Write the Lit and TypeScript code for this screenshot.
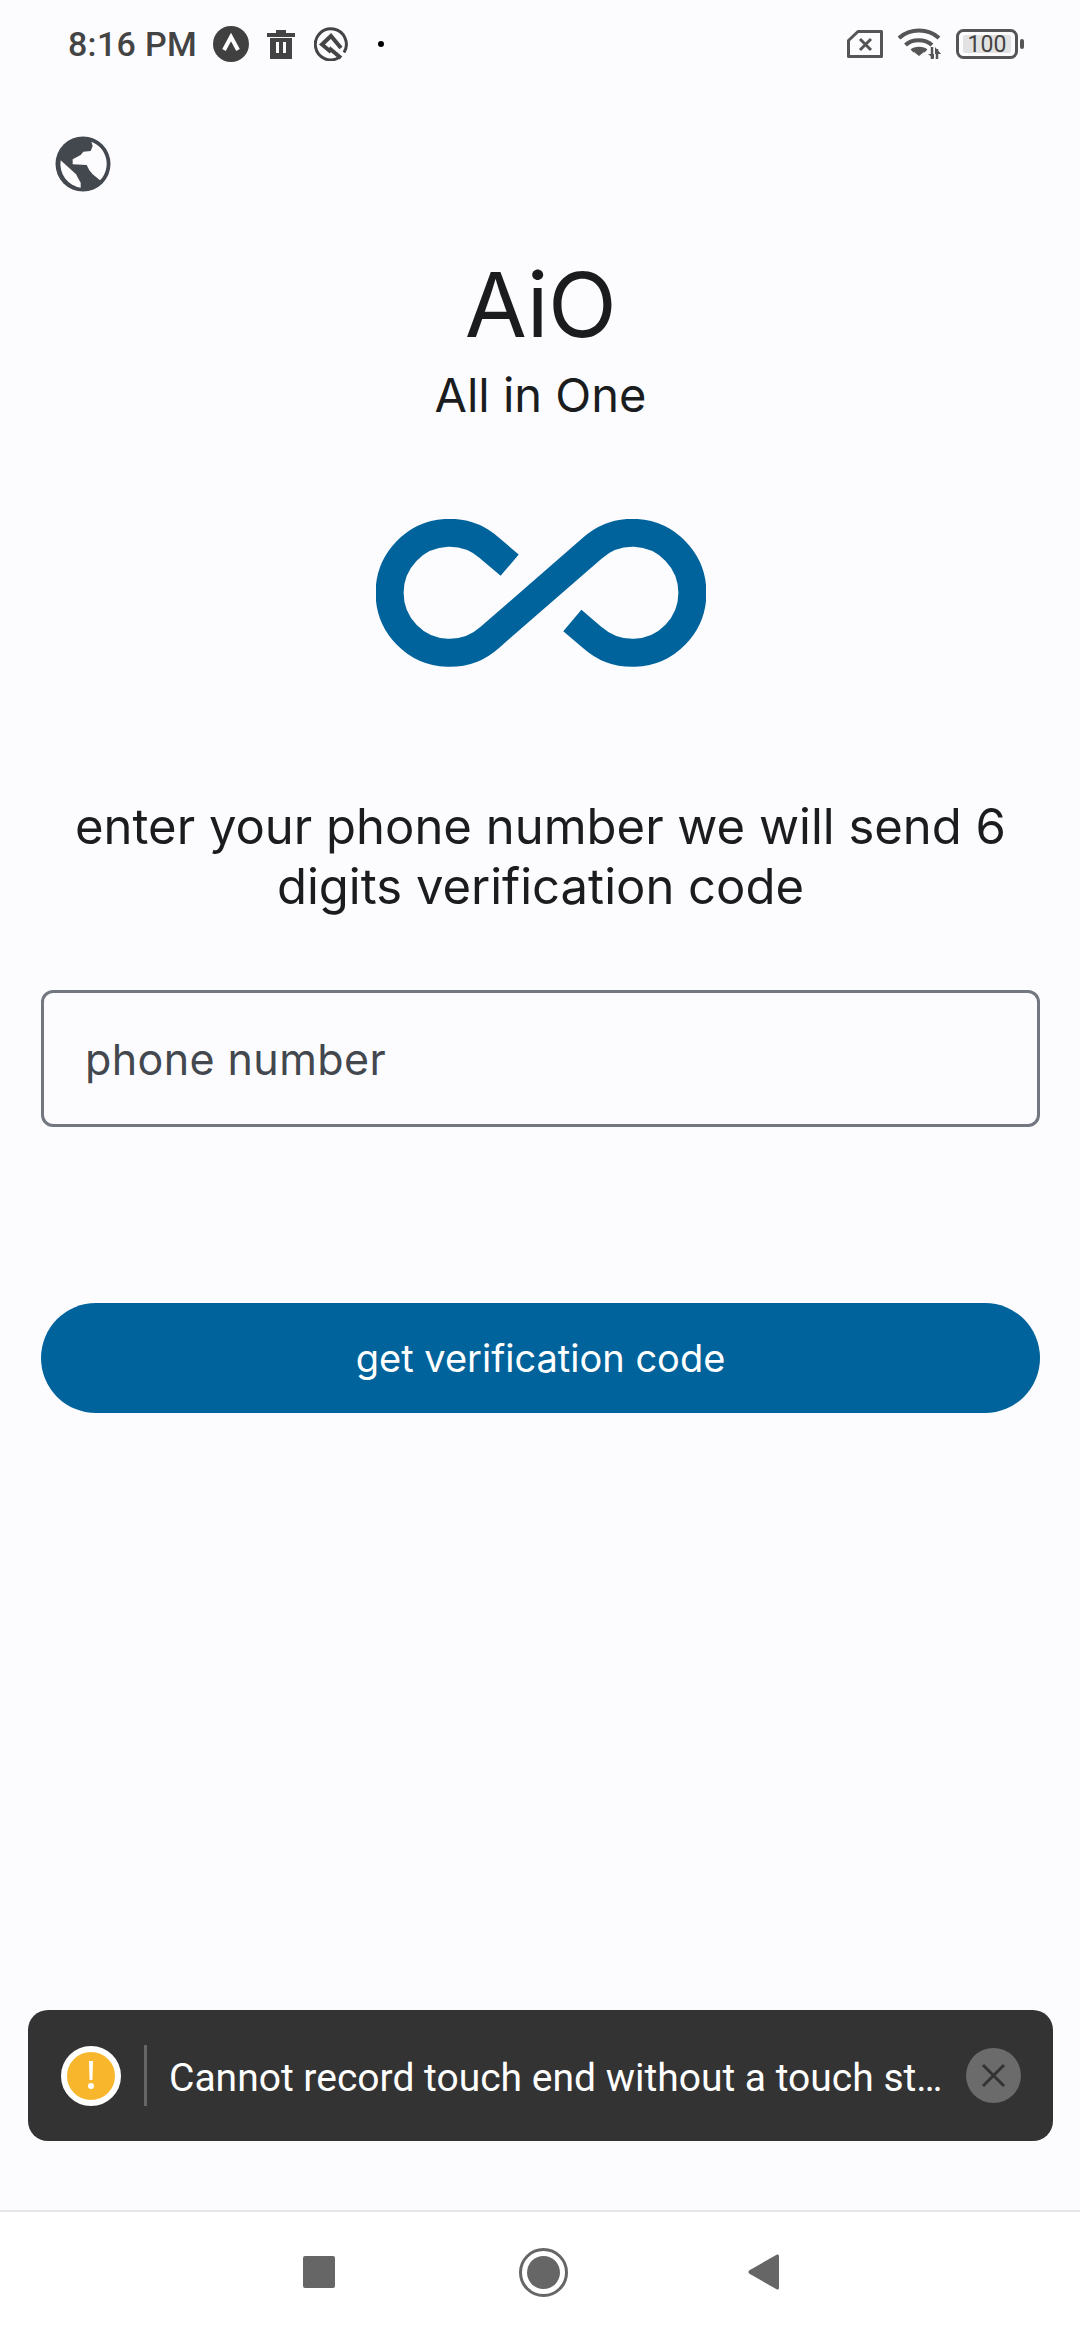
import { LitElement, html, css } from "lit";
import { customElement } from "lit/decorators.js";

@customElement("app-root")
export class AppRoot extends LitElement {
  static styles = css`
    :host { display: block; }
    .page {
      position: relative; width: 1080px; height: 2340px; background: #fcfcff;
      display: flex; flex-direction: column; overflow: hidden;
      font-family: "Inter", "Liberation Sans", sans-serif; color: #1a1c1e;
    }
    .status {
      height: 88px; display: flex; align-items: center; padding: 0 56px 0 68px; flex: none;
      box-sizing: border-box; justify-content: space-between;
    }
    .status-left, .status-right { display: flex; align-items: center; }
    .time { font: 500 34px "Roboto", sans-serif; letter-spacing: 0.3px; color: #444; width: 145px; white-space: nowrap; }
    .i-a { margin-right: 18px; }
    .i-t { margin-right: 19px; }
    .i-q { margin-right: 30px; }
    .i-s { margin-right: 15px; }
    .i-w { margin-right: 15px; }
    .globe { margin: 47px 0 0 54px; width: 58px; height: 58px; display: block; flex: none; }
    .content { display: flex; flex-direction: column; align-items: center; padding: 0 40px 0 41px; }
    .title { font-size: 90px; line-height: 100px; margin-top: 62px; letter-spacing: -0.5px; }
    .sub { font-size: 47px; line-height: 60px; margin-top: 10px; }
    .logo { display: block; margin-top: 94px; }
    .lead {
      font-size: 49px; line-height: 60px; text-align: center; margin-top: 130px; width: 100%;
    }
    .input {
      box-sizing: border-box; width: 100%; height: 137px; margin-top: 73px;
      border: 3px solid #73777f; border-radius: 12px; display: flex; align-items: center;
      padding-left: 41px; font-size: 43px; color: #43474e; letter-spacing: 0.4px;
    }
    .btn {
      width: 100%; height: 110px; margin-top: 176px; border-radius: 55px; background: #00639b;
      color: #fff; display: flex; align-items: center; justify-content: center;
      font-size: 38px;
    }
    .nav {
      margin-top: auto; height: 130px; flex: none; box-sizing: border-box; background: #fff;
      border-top: 2px solid #e6e6e9; display: flex; align-items: center;
      padding: 0 0 8px 303px;
    }
    .nav .sq { margin-right: 184px; }
    .nav .ci { margin-right: 180px; }
    .toast {
      position: absolute; left: 28px; top: 2010px; width: 1025px; height: 131px; box-sizing: border-box;
      background: #333; border-radius: 20px; display: flex; align-items: center; padding: 0 32px 0 33px;
      font: 400 39px "Roboto", sans-serif; color: #fff;
    }
    .warn {
      width: 60px; height: 60px; box-sizing: border-box; border: 6px solid #fff; border-radius: 50%;
      background: #f8b62d; flex: none; display: flex; align-items: center; justify-content: center;
    }
    .sep { width: 3px; height: 61px; background: #666; margin: 0 22px 0 23px; flex: none; }
    .msg {
      flex: 1; min-width: 0; white-space: nowrap; overflow: hidden; text-overflow: ellipsis;
      line-height: 50px; padding-top: 5px;
    }
    .close { margin-left: 19px; flex: none; display: block; }
  `;

  render() {
    return html`
      <div class="page">
        <div class="status">
          <div class="status-left">
            <span class="time">8:16 PM</span>
            <svg class="i-a" width="36" height="36" viewBox="0 0 36 36">
              <circle cx="18" cy="18" r="18" fill="#404040" />
              <path d="M11 24 L18 11 L25 24" fill="none" stroke="#fff" stroke-width="4" />
            </svg>
            <svg class="i-t" width="28" height="30" viewBox="0 0 28 30">
              <path fill="#444" fill-rule="evenodd" d="M0 4h9V1h10v3h9v4H0z M3 9h22v21H3z M9 13v11h3V13z M16 13v11h3V13z" />
            </svg>
            <svg class="i-q" width="34" height="34" viewBox="0 0 34 34" fill="none" stroke="#444">
              <path stroke-width="3" d="M25 30.5 A15.5 15.5 0 1 1 30 25.5" />
              <path stroke-width="4" d="M27 21 L17 9 L8 17.5 L17 25 M15 21 L27 31" />
            </svg>
            <svg width="6" height="6" viewBox="0 0 6 6"><circle cx="3" cy="3" r="3" fill="#000" /></svg>
          </div>
          <div class="status-right">
            <svg class="i-s" width="36" height="28" viewBox="0 0 36 28" fill="none" stroke="#555">
              <path stroke-width="3" stroke-linejoin="round" d="M11 1.5 H34.5 V26.5 H1.5 V10.5 Z" />
              <path stroke-width="3" d="M13 9 L24 20 M24 9 L13 20" />
            </svg>
            <svg class="i-w" width="43" height="32" viewBox="0 0 43 32" fill="none" stroke="#555">
              <path stroke-width="4" d="M1 10 C12 0 30 0 41 10" />
              <path stroke-width="4" d="M7.5 17 C14 10.5 27 10.5 34 17" />
              <path stroke-width="4" d="M14 23 C17 20 25 20 28 23" />
              <path fill="#555" stroke="none" d="M16 24 L21 20.5 L26 24 L21 28z" />
              <path stroke-width="2.5" d="M34 19 V31 M39 21 V31" />
              <path fill="#555" stroke="none" d="M30 26 H36 V31z M37 19 L43 26 H37z" />
            </svg>
            <svg width="68" height="30" viewBox="0 0 68 30">
              <rect x="1.5" y="1.5" width="59" height="27" rx="6" fill="none" stroke="#555" stroke-width="3" />
              <rect x="7" y="6" width="48" height="18" rx="2" fill="#e2e2e2" />
              <rect x="64" y="10" width="4" height="10" rx="2" fill="#555" />
              <text x="31" y="23" text-anchor="middle" font-family="Roboto, sans-serif" font-size="23" fill="#444">100</text>
            </svg>
          </div>
        </div>
        <svg class="globe" viewBox="12 12 174 174">
          <circle cx="99" cy="99" r="82.5" fill="#43474e" />
          <path fill="#fcfcff" d="M32 88 L65 118 L78 130 L92 155 L92 170 A72 72 0 0 1 32 88 Z" />
          <path fill="#fcfcff" d="M124 32 L128 45 L122 60 L100 62 L92 72 L68 85 L68 100 L110 102 L118 118 L128 130 L150 148 A71 71 0 0 0 124 32 Z" />
        </svg>
        <div class="content">
          <div class="title">AiO</div>
          <div class="sub">All in One</div>
          <svg class="logo" width="330" height="148" viewBox="105 84 990 443">
            <path fill="none" stroke="#00639b" stroke-width="84"
              d="M506 222 L446 171 A180 180 0 1 0 446 439 L754 171 A180 180 0 1 1 754 439 L694 388" />
          </svg>
          <div class="lead">enter your phone number we will send 6 digits verification code</div>
          <div class="input">phone number</div>
          <div class="btn">get verification code</div>
        </div>
        <div class="toast">
          <div class="warn">
            <svg width="8" height="30" viewBox="0 0 8 30">
              <path fill="#fff" d="M2 0h4l-.6 19H2.6z" /><circle cx="4" cy="25" r="3" fill="#fff" />
            </svg>
          </div>
          <div class="sep"></div>
          <div class="msg">Cannot record touch end without a touch start.</div>
          <svg class="close" width="55" height="55" viewBox="0 0 55 55">
            <circle cx="27.5" cy="27.5" r="27.5" fill="#6b6b6b" />
            <path d="M17 17 L38 38 M38 17 L17 38" stroke="#333" stroke-width="3" />
          </svg>
        </div>
        <div class="nav">
          <svg class="sq" width="32" height="32" viewBox="0 0 32 32"><rect width="32" height="32" rx="2" fill="#666" /></svg>
          <svg class="ci" width="49" height="49" viewBox="0 0 49 49">
            <circle cx="24.5" cy="24.5" r="23" fill="none" stroke="#666" stroke-width="3" />
            <circle cx="24.5" cy="24.5" r="16.5" fill="#666" />
          </svg>
          <svg width="31" height="36" viewBox="0 0 31 36">
            <path d="M29 0.5 Q31 0 31 2 V34 Q31 36 29 35.5 L1 19.5 Q0 18 1 16.5 Z" fill="#666" />
          </svg>
        </div>
      </div>
    `;
  }
}
